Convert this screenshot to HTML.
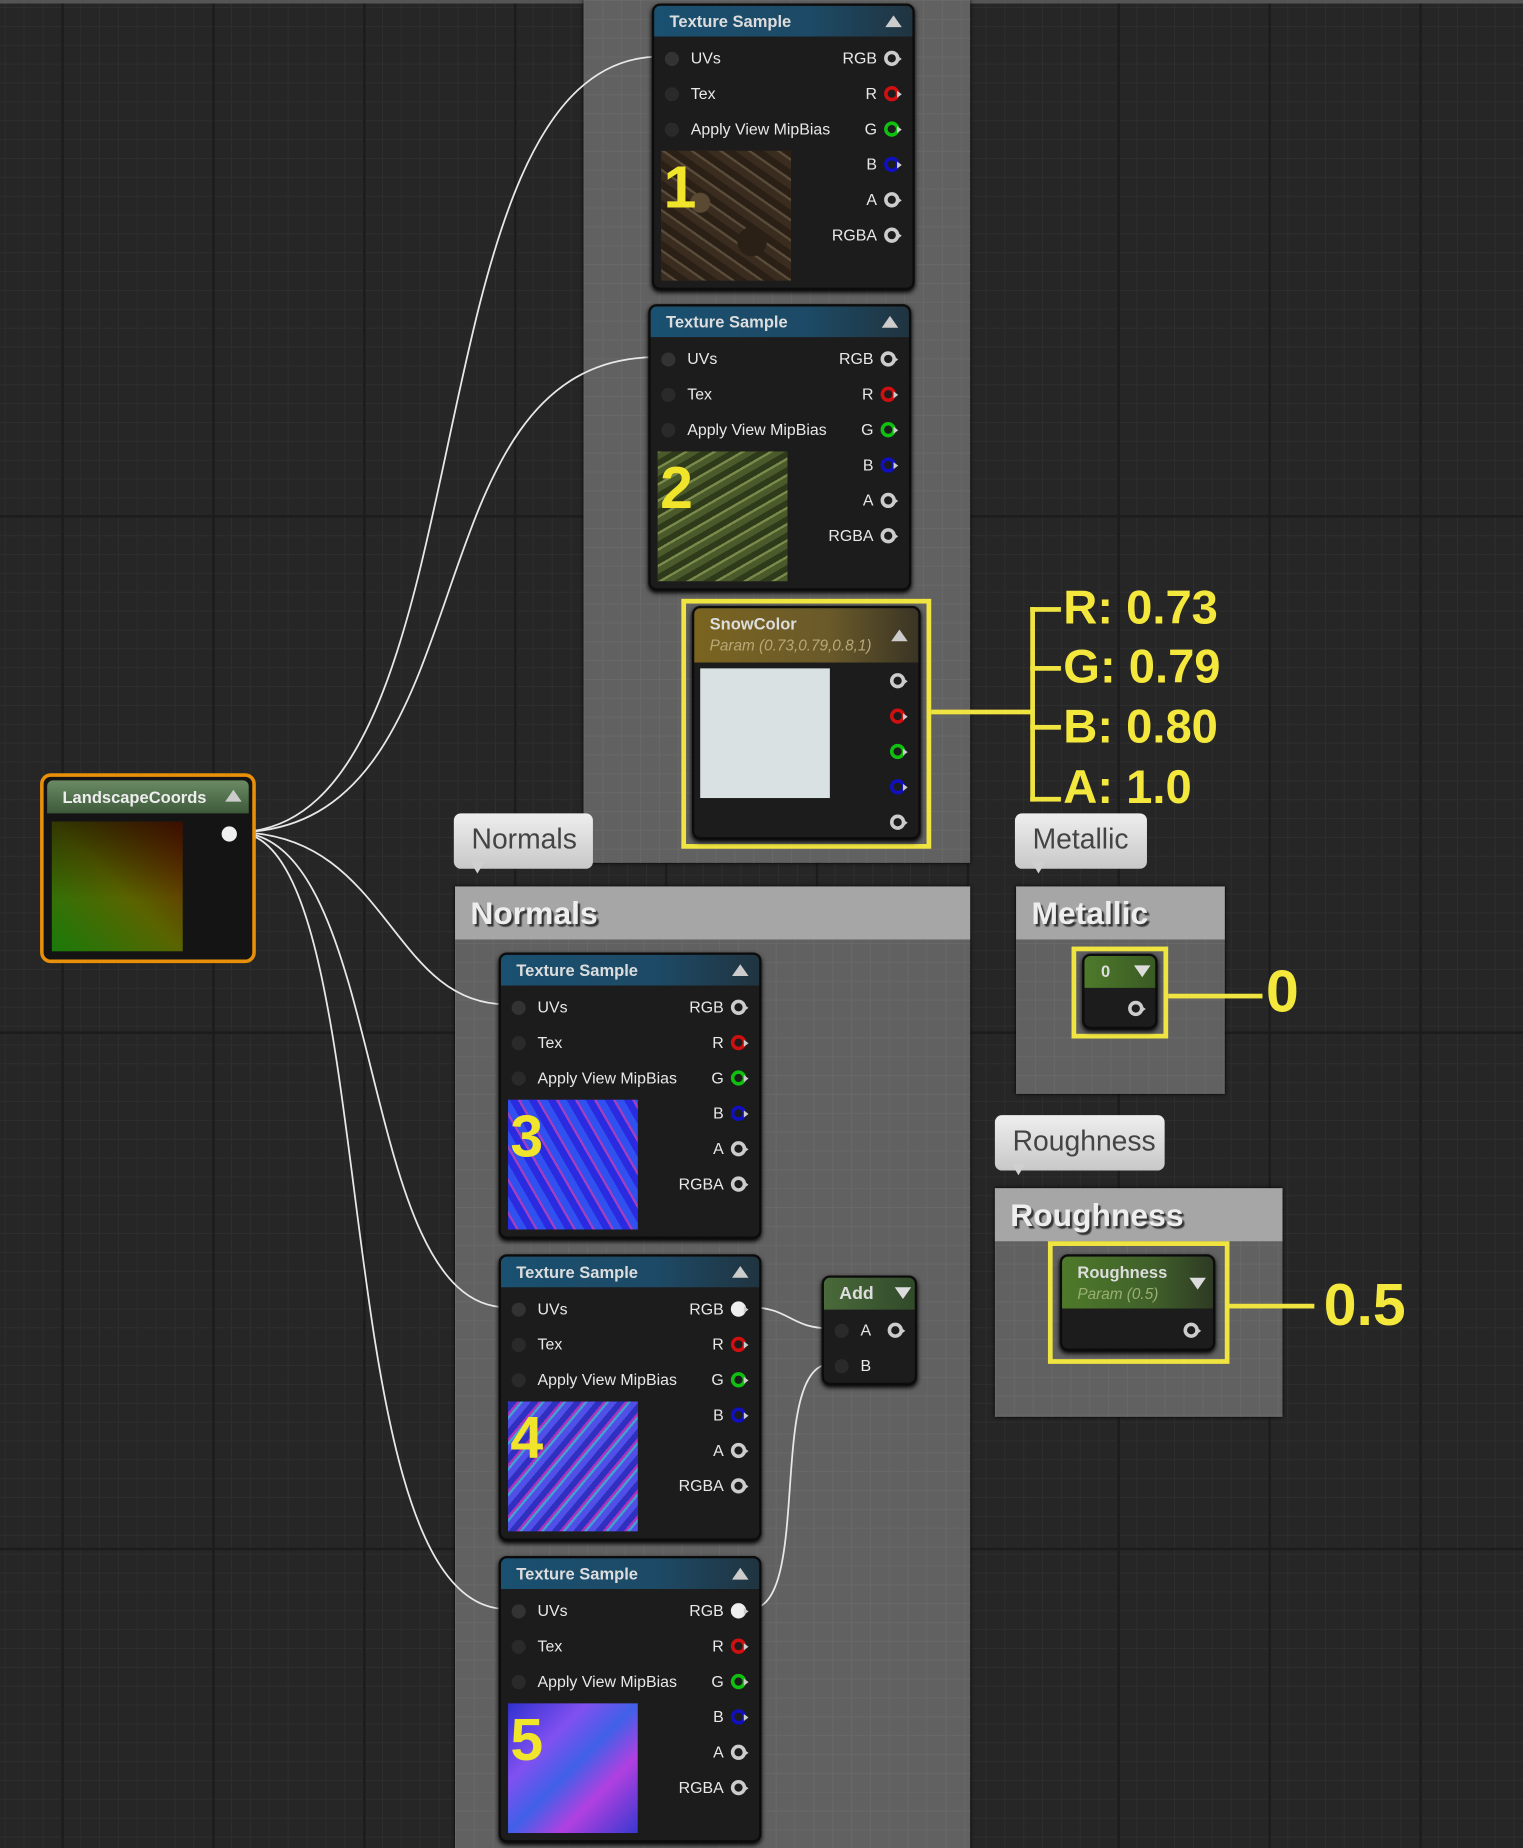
<!DOCTYPE html>
<html><head><meta charset="utf-8"><style>
*{margin:0;padding:0;box-sizing:border-box}
html,body{width:1523px;height:1848px;overflow:hidden;background:#262626}
#s{position:absolute;left:0;top:0;width:1292px;height:1568px;transform:scale(1.17879);transform-origin:0 0;font-family:"Liberation Sans",sans-serif;
background-color:#262626;
background-image:linear-gradient(#1c1c1c 2px,transparent 2px),linear-gradient(90deg,#1c1c1c 2px,transparent 2px),linear-gradient(#2e2e2e 1px,transparent 1px),linear-gradient(90deg,#2e2e2e 1px,transparent 1px);
background-size:1292px 438px,128px 100%,16px 16px,16px 16px;background-position:0 437px,52px 0,0 6px,4px 0}
.a{position:absolute}
.cm{position:absolute;background:#616161;background-image:linear-gradient(#686868 1px,transparent 1px),linear-gradient(90deg,#686868 1px,transparent 1px);background-size:16px 16px;box-shadow:0 0 3px #000}
.ch{position:absolute;left:0;right:0;top:0;height:45px;background:#a6a6a6;color:#eee;font-weight:bold;font-size:27px;padding:8px 0 0 13px;text-shadow:2px 2px 1px #333}
.tag{position:absolute;background:linear-gradient(#eee,#c8c8c8);border-radius:6px;color:#444;font-size:24px;padding:9px 0 0 15px;height:47px}
.tag:after{content:"";position:absolute;left:14px;bottom:-10px;border:6px solid transparent;border-top:10px solid #d0d0d0}
.n{position:absolute;width:223px;height:243px;background:#1c1c1c;border:2px solid #0c0c0c;border-radius:7px;box-shadow:0 2px 4px #000;color:#e6e6e6;font-size:13px}
.h{position:absolute;left:0;right:0;top:0;height:26px;border-radius:5px 5px 0 0;background:linear-gradient(90deg,#1a5070,#1d4a66 60%,#203440);font-weight:bold;padding:5px 0 0 13px;font-size:14px;color:#ddd}
.tri{position:absolute;right:9px;top:8px;border:7px solid transparent;border-bottom:10px solid #ccc;border-top:0}
.trd{position:absolute;border:7px solid transparent;border-top:10px solid #ddd;border-bottom:0}
.lb{position:absolute;font-size:13.5px;color:#e8e8e8}
.ip{position:absolute;width:12px;height:12px;border-radius:50%;background:#2a2a2a}
.op{position:absolute;width:13px;height:13px;border-radius:50%;border:3px solid #ccc}
.op:after{content:"";position:absolute;right:-8px;top:1px;border:3px solid transparent;border-left:4px solid #ccc}
.y{position:absolute;border:4px solid #f0e540}
.yl{position:absolute;background:#f0e540}
.yt{position:absolute;color:#f5e83c;font-weight:bold;font-size:40px;font-family:"Liberation Sans",sans-serif}
.img{position:absolute;left:6px;top:123px;width:110px;height:110px}
.num{position:absolute;left:2px;top:2px;color:#f0e52a;font-size:50px;font-weight:bold;font-family:"Liberation Sans",sans-serif}
</style></head><body><div id="s">
<div class="a" style="left:0;top:0;width:1292px;height:3px;background:#555"></div>

<div class="cm" style="left:495px;top:0;width:328px;height:732px"></div>
<div class="cm" style="left:386px;top:752px;width:437px;height:816px"><div class="ch">Normals</div></div>
<div class="cm" style="left:862px;top:752px;width:177px;height:176px"><div class="ch">Metallic</div></div>
<div class="cm" style="left:844px;top:1008px;width:244px;height:194px"><div class="ch">Roughness</div></div>
<div class="tag" style="left:385px;top:690px;width:118px">Normals</div>
<div class="tag" style="left:861px;top:690px;width:112px">Metallic</div>
<div class="tag" style="left:844px;top:946px;width:144px">Roughness</div>

<svg class="a" style="left:0;top:0" width="1292" height="1568" fill="none" stroke="#e8e8e8" stroke-width="1.5">
<path d="M200 706 C 420 706, 340 48, 560 48"/>
<path d="M200 706 C 420 706, 340 303, 557 303"/>
<path d="M200 706 C 330 706, 330 852, 430 852"/>
<path d="M200 706 C 330 706, 300 1109, 430 1109"/>
<path d="M200 706 C 330 706, 270 1365, 430 1365"/>
<path d="M636 1109 C 670 1109, 670 1127, 705 1127"/>
<path d="M636 1365 C 690 1365, 650 1157, 705 1157"/>
</svg>

<div class="n" style="left:553px;top:3px">
<div class="h">Texture Sample<div class="tri"></div></div>
<div class="ip" style="left:9px;top:39px;background:#333"></div><div class="lb" style="left:31px;top:37px">UVs</div>
<div class="ip" style="left:9px;top:69px"></div><div class="lb" style="left:31px;top:67px">Tex</div>
<div class="ip" style="left:9px;top:99px"></div><div class="lb" style="left:31px;top:97px">Apply View MipBias</div>
<div class="lb" style="right:30px;top:37px">RGB</div><div class="op" style="left:195px;top:38px"></div>
<div class="lb" style="right:30px;top:67px">R</div><div class="op" style="left:195px;top:68px;border-color:#d01010"></div>
<div class="lb" style="right:30px;top:97px">G</div><div class="op" style="left:195px;top:98px;border-color:#10c010"></div>
<div class="lb" style="right:30px;top:127px">B</div><div class="op" style="left:195px;top:128px;border-color:#1010c0"></div>
<div class="lb" style="right:30px;top:157px">A</div><div class="op" style="left:195px;top:158px"></div>
<div class="lb" style="right:30px;top:187px">RGBA</div><div class="op" style="left:195px;top:188px"></div>
<div class="img" style="background:radial-gradient(circle at 30% 40%,#5a4a34 0 8px,transparent 9px),radial-gradient(circle at 70% 70%,#2a2016 0 12px,transparent 13px),repeating-linear-gradient(35deg,#3a2c1e 0 6px,#5a4c3a 6px 8px,#2a2016 8px 14px),#4a3a28"><div class="num">1</div></div>
</div>

<div class="n" style="left:550px;top:258px">
<div class="h">Texture Sample<div class="tri"></div></div>
<div class="ip" style="left:9px;top:39px;background:#333"></div><div class="lb" style="left:31px;top:37px">UVs</div>
<div class="ip" style="left:9px;top:69px"></div><div class="lb" style="left:31px;top:67px">Tex</div>
<div class="ip" style="left:9px;top:99px"></div><div class="lb" style="left:31px;top:97px">Apply View MipBias</div>
<div class="lb" style="right:30px;top:37px">RGB</div><div class="op" style="left:195px;top:38px"></div>
<div class="lb" style="right:30px;top:67px">R</div><div class="op" style="left:195px;top:68px;border-color:#d01010"></div>
<div class="lb" style="right:30px;top:97px">G</div><div class="op" style="left:195px;top:98px;border-color:#10c010"></div>
<div class="lb" style="right:30px;top:127px">B</div><div class="op" style="left:195px;top:128px;border-color:#1010c0"></div>
<div class="lb" style="right:30px;top:157px">A</div><div class="op" style="left:195px;top:158px"></div>
<div class="lb" style="right:30px;top:187px">RGBA</div><div class="op" style="left:195px;top:188px"></div>
<div class="img" style="background:repeating-linear-gradient(-30deg,#4a5a2a 0 5px,#7a8a4a 5px 7px,#2e3a1a 7px 12px),#55652e"><div class="num">2</div></div>
</div>

<div class="n" style="left:423px;top:808px">
<div class="h">Texture Sample<div class="tri"></div></div>
<div class="ip" style="left:9px;top:39px;background:#333"></div><div class="lb" style="left:31px;top:37px">UVs</div>
<div class="ip" style="left:9px;top:69px"></div><div class="lb" style="left:31px;top:67px">Tex</div>
<div class="ip" style="left:9px;top:99px"></div><div class="lb" style="left:31px;top:97px">Apply View MipBias</div>
<div class="lb" style="right:30px;top:37px">RGB</div><div class="op" style="left:195px;top:38px"></div>
<div class="lb" style="right:30px;top:67px">R</div><div class="op" style="left:195px;top:68px;border-color:#d01010"></div>
<div class="lb" style="right:30px;top:97px">G</div><div class="op" style="left:195px;top:98px;border-color:#10c010"></div>
<div class="lb" style="right:30px;top:127px">B</div><div class="op" style="left:195px;top:128px;border-color:#1010c0"></div>
<div class="lb" style="right:30px;top:157px">A</div><div class="op" style="left:195px;top:158px"></div>
<div class="lb" style="right:30px;top:187px">RGBA</div><div class="op" style="left:195px;top:188px"></div>
<div class="img" style="background:repeating-linear-gradient(60deg,#2a2ae0 0 6px,#a040c0 6px 8px,#3050f0 8px 14px),#3a3ae8"><div class="num">3</div></div>
</div>

<div class="n" style="left:423px;top:1064px">
<div class="h">Texture Sample<div class="tri"></div></div>
<div class="ip" style="left:9px;top:39px;background:#333"></div><div class="lb" style="left:31px;top:37px">UVs</div>
<div class="ip" style="left:9px;top:69px"></div><div class="lb" style="left:31px;top:67px">Tex</div>
<div class="ip" style="left:9px;top:99px"></div><div class="lb" style="left:31px;top:97px">Apply View MipBias</div>
<div class="lb" style="right:30px;top:37px">RGB</div><div class="op" style="left:195px;top:38px;background:#eee;border-color:#eee"></div>
<div class="lb" style="right:30px;top:67px">R</div><div class="op" style="left:195px;top:68px;border-color:#d01010"></div>
<div class="lb" style="right:30px;top:97px">G</div><div class="op" style="left:195px;top:98px;border-color:#10c010"></div>
<div class="lb" style="right:30px;top:127px">B</div><div class="op" style="left:195px;top:128px;border-color:#1010c0"></div>
<div class="lb" style="right:30px;top:157px">A</div><div class="op" style="left:195px;top:158px"></div>
<div class="lb" style="right:30px;top:187px">RGBA</div><div class="op" style="left:195px;top:188px"></div>
<div class="img" style="background:repeating-linear-gradient(-50deg,#5050e8 0 5px,#40a0d0 5px 7px,#b030c0 7px 9px,#3030c0 9px 14px),#4040d8"><div class="num">4</div></div>
</div>

<div class="n" style="left:423px;top:1320px">
<div class="h">Texture Sample<div class="tri"></div></div>
<div class="ip" style="left:9px;top:39px;background:#333"></div><div class="lb" style="left:31px;top:37px">UVs</div>
<div class="ip" style="left:9px;top:69px"></div><div class="lb" style="left:31px;top:67px">Tex</div>
<div class="ip" style="left:9px;top:99px"></div><div class="lb" style="left:31px;top:97px">Apply View MipBias</div>
<div class="lb" style="right:30px;top:37px">RGB</div><div class="op" style="left:195px;top:38px;background:#eee;border-color:#eee"></div>
<div class="lb" style="right:30px;top:67px">R</div><div class="op" style="left:195px;top:68px;border-color:#d01010"></div>
<div class="lb" style="right:30px;top:97px">G</div><div class="op" style="left:195px;top:98px;border-color:#10c010"></div>
<div class="lb" style="right:30px;top:127px">B</div><div class="op" style="left:195px;top:128px;border-color:#1010c0"></div>
<div class="lb" style="right:30px;top:157px">A</div><div class="op" style="left:195px;top:158px"></div>
<div class="lb" style="right:30px;top:187px">RGBA</div><div class="op" style="left:195px;top:188px"></div>
<div class="img" style="background:linear-gradient(135deg,#3030d0,#8050f0 30%,#4060e8 50%,#b040e0 70%,#3838d0)"><div class="num">5</div></div>
</div>

<div class="y" style="left:578px;top:508px;width:212px;height:212px"></div>
<div class="n" style="left:587px;top:514px;width:194px;height:198px">
<div class="h" style="height:46px;background:linear-gradient(90deg,#7a6420,#6a5a2a 60%,#3a3424)">SnowColor<div style="font-weight:normal;font-style:italic;font-size:13px;color:#b8a878;margin-top:3px">Param (0.73,0.79,0.8,1)</div><div class="tri" style="top:18px"></div></div>
<div class="a" style="left:5px;top:51px;width:110px;height:110px;background:#dae1e3"></div>
<div class="op" style="left:166px;top:55px"></div>
<div class="op" style="left:166px;top:85px;border-color:#d01010"></div>
<div class="op" style="left:166px;top:115px;border-color:#10c010"></div>
<div class="op" style="left:166px;top:145px;border-color:#1010c0"></div>
<div class="op" style="left:166px;top:175px"></div>
</div>
<div class="yl" style="left:790px;top:602px;width:86px;height:4px"></div>
<div class="yl" style="left:874px;top:515px;width:4px;height:165px"></div>
<div class="yl" style="left:874px;top:515px;width:26px;height:4px"></div>
<div class="yl" style="left:874px;top:565px;width:26px;height:4px"></div>
<div class="yl" style="left:874px;top:615px;width:26px;height:4px"></div>
<div class="yl" style="left:874px;top:676px;width:26px;height:4px"></div>
<div class="yt" style="left:902px;top:494px">R: 0.73</div>
<div class="yt" style="left:902px;top:544px">G: 0.79</div>
<div class="yt" style="left:902px;top:595px">B: 0.80</div>
<div class="yt" style="left:902px;top:646px">A: 1.0</div>

<div class="y" style="left:909px;top:803px;width:82px;height:78px"></div>
<div class="n" style="left:918px;top:809px;width:64px;height:64px">
<div class="h" style="height:27px;background:linear-gradient(90deg,#4e7a2a,#3a5a24);padding-left:14px">0</div>
<div class="trd" style="left:42px;top:8px"></div>
<div class="op" style="left:37px;top:38px"></div>
</div>
<div class="yl" style="left:991px;top:843px;width:80px;height:4px"></div>
<div class="yt" style="left:1074px;top:812px;font-size:50px">0</div>

<div class="y" style="left:889px;top:1053px;width:154px;height:104px"></div>
<div class="n" style="left:899px;top:1064px;width:132px;height:82px">
<div class="h" style="height:44px;background:linear-gradient(90deg,#4e7a2a,#40602a 60%,#2e3a24)">Roughness<div style="font-weight:normal;font-style:italic;font-size:13px;color:#9ab070;margin-top:3px">Param (0.5)</div></div>
<div class="trd" style="left:108px;top:18px"></div>
<div class="op" style="left:103px;top:56px"></div>
</div>
<div class="yl" style="left:1043px;top:1106px;width:72px;height:4px"></div>
<div class="yt" style="left:1123px;top:1078px;font-size:50px">0.5</div>

<div class="n" style="left:697px;top:1082px;width:81px;height:93px">
<div class="h" style="height:27px;background:linear-gradient(90deg,#4a6a3a,#304a2a);font-size:15px">Add</div>
<div class="trd" style="left:60px;top:8px"></div>
<div class="ip" style="left:9px;top:39px"></div><div class="lb" style="left:31px;top:37px">A</div>
<div class="op" style="left:54px;top:38px"></div>
<div class="ip" style="left:9px;top:69px"></div><div class="lb" style="left:31px;top:67px">B</div>
</div>

<div class="a" style="left:34px;top:656px;width:183px;height:161px;border:3px solid #e8900a;border-radius:9px;background:#141414">
<div class="a" style="left:3px;top:3px;right:3px;height:28px;border-radius:5px 5px 0 0;background:linear-gradient(#6a8a64,#3e5a3a);color:#eee;font-weight:bold;font-size:14px;padding:6px 0 0 13px">LandscapeCoords<div class="tri" style="top:8px;right:6px"></div></div>
<div class="a" style="left:7px;top:38px;width:111px;height:110px;background:linear-gradient(to top right,#1a7a0a,#5a6400 50%,#6a1a00)"></div>
<div class="a" style="left:7px;top:38px;width:111px;height:110px;background:linear-gradient(180deg,rgba(0,0,0,.45),rgba(0,0,0,0) 60%)"></div>
<div class="a" style="left:151px;top:42px;width:13px;height:13px;border-radius:50%;background:#f0f0f0"></div>
</div>
</div></body></html>
